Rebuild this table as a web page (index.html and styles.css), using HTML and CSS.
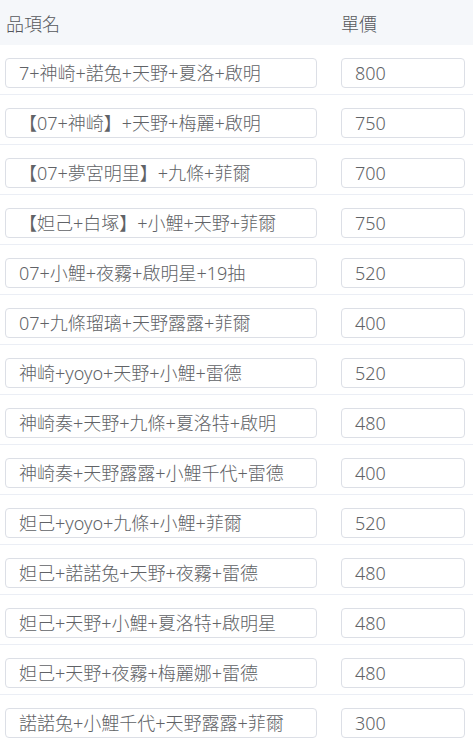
FILE: index.html
```html
<!DOCTYPE html>
<html lang="zh-Hant">
<head>
<meta charset="utf-8">
<link rel="stylesheet" href="styles.css">
</head>
<body>
<div class="table">
  <div class="head">
    <div class="cell">品項名</div>
    <div class="cell">單價</div>
  </div>
  <div class="row"><div class="cell"><div class="field name">7+神崎+諾兔+天野+夏洛+啟明</div></div><div class="cell"><div class="field price">800</div></div></div>
  <div class="row"><div class="cell"><div class="field name">【07+神崎】+天野+梅麗+啟明</div></div><div class="cell"><div class="field price">750</div></div></div>
  <div class="row"><div class="cell"><div class="field name">【07+夢宮明里】+九條+菲爾</div></div><div class="cell"><div class="field price">700</div></div></div>
  <div class="row"><div class="cell"><div class="field name">【妲己+白塚】+小鯉+天野+菲爾</div></div><div class="cell"><div class="field price">750</div></div></div>
  <div class="row"><div class="cell"><div class="field name">07+小鯉+夜霧+啟明星+19抽</div></div><div class="cell"><div class="field price">520</div></div></div>
  <div class="row"><div class="cell"><div class="field name">07+九條瑠璃+天野露露+菲爾</div></div><div class="cell"><div class="field price">400</div></div></div>
  <div class="row"><div class="cell"><div class="field name">神崎+yoyo+天野+小鯉+雷德</div></div><div class="cell"><div class="field price">520</div></div></div>
  <div class="row"><div class="cell"><div class="field name">神崎奏+天野+九條+夏洛特+啟明</div></div><div class="cell"><div class="field price">480</div></div></div>
  <div class="row"><div class="cell"><div class="field name">神崎奏+天野露露+小鯉千代+雷德</div></div><div class="cell"><div class="field price">400</div></div></div>
  <div class="row"><div class="cell"><div class="field name">妲己+yoyo+九條+小鯉+菲爾</div></div><div class="cell"><div class="field price">520</div></div></div>
  <div class="row"><div class="cell"><div class="field name">妲己+諾諾兔+天野+夜霧+雷德</div></div><div class="cell"><div class="field price">480</div></div></div>
  <div class="row"><div class="cell"><div class="field name">妲己+天野+小鯉+夏洛特+啟明星</div></div><div class="cell"><div class="field price">480</div></div></div>
  <div class="row"><div class="cell"><div class="field name">妲己+天野+夜霧+梅麗娜+雷德</div></div><div class="cell"><div class="field price">480</div></div></div>
  <div class="row"><div class="cell"><div class="field name">諾諾兔+小鯉千代+天野露露+菲爾</div></div><div class="cell"><div class="field price">300</div></div></div>
</div>
</body>
</html>
```
FILE: styles.css
```css
html, body {
  margin: 0;
  padding: 0;
  background: #ffffff;
}
body {
  font-family: "Noto Sans", "Noto Sans CJK TC", sans-serif;
  font-size: 18px;
  font-weight: 300;
  color: #606266;
}
.table {
  width: 473px;
}
.head,
.row {
  display: grid;
  grid-template-columns: 336px 137px;
}
.head {
  height: 45px;
  background: #f5f7fa;
  align-items: center;
}
.head .cell {
  padding-left: 6px;
  color: #55575c;
}
.head .cell:nth-child(2) {
  padding-left: 5px;
}
.row {
  height: 50px;
  box-sizing: border-box;
  padding-top: 13px;
  border-bottom: 1px solid #ebeef5;
}
.row .cell {
  padding-left: 5px;
}
.field {
  box-sizing: border-box;
  height: 30px;
  line-height: 28px;
  border: 1px solid #dcdfe6;
  border-radius: 4px;
  padding: 0 13px;
  white-space: nowrap;
  overflow: hidden;
  background: #fff;
}
.field.name {
  width: 312px;
}
.field.price {
  width: 124px;
}
```
